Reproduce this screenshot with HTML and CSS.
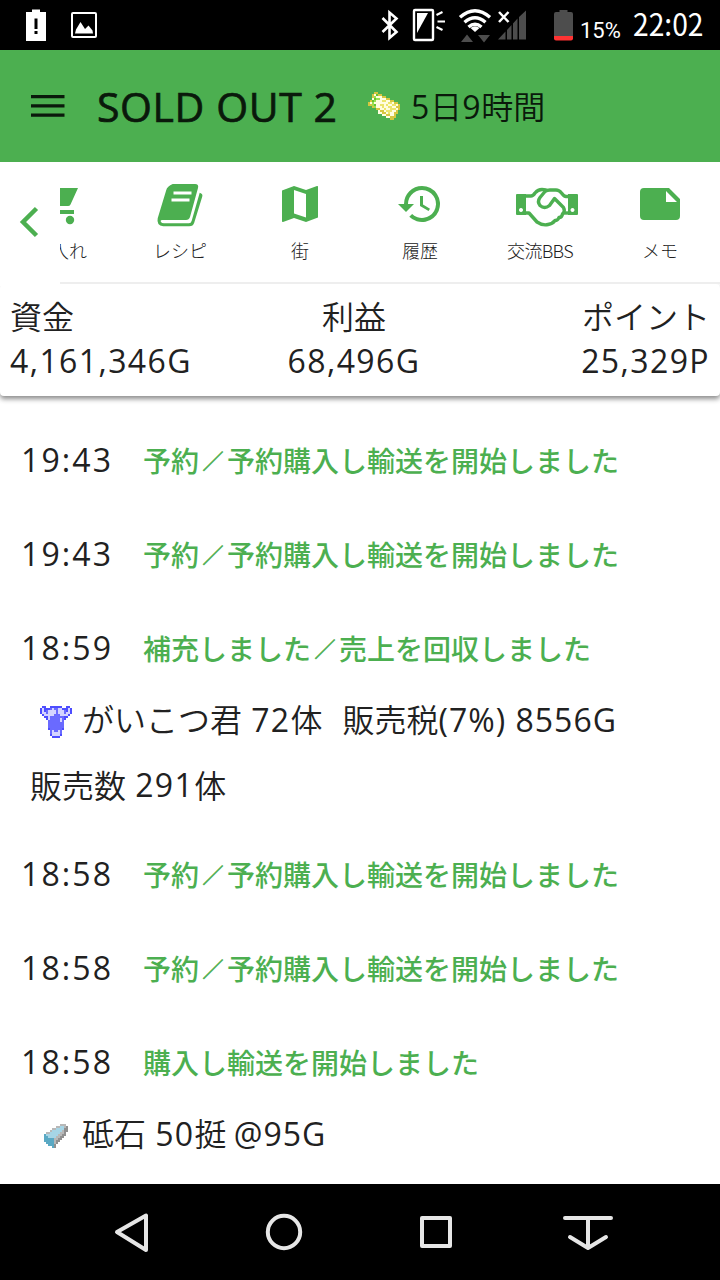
FILE: index.html
```
<!DOCTYPE html>
<html lang="ja">
<head>
    <meta charset="UTF-8">
    <meta name="viewport" content="width=device-width, initial-scale=1.0">
    <title>SOLD OUT 2</title>
    <link rel="stylesheet" href="styles.css">
</head>
<body>
    <div class="screen">
        <div class="status-bar">
            <svg class="status-left" width="110" height="50" viewBox="0 0 110 50">
                <path fill="#fff" d="M26 12h6V9.500h8V12h6v29H26z"/>
                <path fill="#000" d="M34.500 18.500h3v10.500h-3zM34.500 31h3v3h-3z"/>
                <rect x="72" y="13" width="24" height="24" rx="1" fill="none" stroke="#fff" stroke-width="2"/>
                <path fill="#fff" d="M75 33.500l1-4 4.500-7.500 4.500 7 3.500-3.500 4 5 .5 3z"/>
            </svg>
            <svg class="status-icons" width="205" height="50" viewBox="370 0 205 50">
                <path fill="none" stroke="#fff" stroke-width="2.600" d="M382.500 18l14 14-7 6V12.500l7 6-14 13.500"/>
                <rect x="414" y="10" width="19" height="30" rx="1" fill="none" stroke="#fff" stroke-width="2.400"/>
                <path fill="#fff" d="M417 13h11l-11 20z"/>
                <path stroke="#fff" stroke-width="2.200" d="M436.500 15l6-3M437.500 21.500h7.500M436.500 27l6 3"/>
                <g fill="none" stroke="#fff" stroke-width="3.400">
                    <path d="M460 17.300q15-13 30 0"/>
                    <path d="M464.500 22.300q10.500-9 21 0"/>
                    <path d="M468.500 27q6.500-5.500 13 0"/>
                </g>
                <path fill="#fff" d="M470.500 28q4.500-3.500 9 0l-4.500 4z"/>
                <path fill="#4d4d4d" d="M461 42l6-7.500 6 7.500zM478 35h12l-6 7.500z"/>
                <path fill="#4d4d4d" d="M498 39.500l7.500-8v8zM507 30l4.500-5v14.500H507zM513 23.500l4.500-5v21H513zM519 17l7-6.500v29h-7z"/>
                <path stroke="#fff" stroke-width="2.500" d="M499 12l9.500 10M508.500 12L499 22"/>
                <path fill="#4d4d4d" d="M556 12h3.500v-2h8v2h3.500q2 0 2 2v22h-19V14q0-2 2-2z"/>
                <path fill="#f33" d="M554 36h19v2.500q0 2-2 2h-15q-2 0-2-2z"/>
            </svg>
            <span class="battery">15%</span>
            <span class="clock">22:02</span>
        </div>

        <header class="app-bar">
            <svg class="menu" width="34" height="24" viewBox="0 0 34 24">
                <path fill="#0a190b" d="M0 1h33.500v3.300H0zM0 10.300h33.500v3.300H0zM0 19.500h33.500v3.300H0z"/>
            </svg>
            <h1>SOLD OUT 2</h1>
            <!-- ticket -->
            <svg class="pixel ticket" width="34" height="28" viewBox="0 0 17 14" shape-rendering="crispEdges">
                <path fill="#fffde0" d="M3 0h2v1h2v1h2v1h2v1h2v1h2v1h1v3h-1v2h-1v2h-1v1h-2v-1h-2v-1h-2v-1h-2V9H4V8H2V7H0V5h1V4h1V1h1z"/>
                <path stroke="#d6c640" d="M3 .5h2M2 1.500h1M5 1.500h2M2 2.500h1M7 2.500h2M9 3.500h2M1 4.500h1M11 4.500h2M0 5.500h1M13 5.500h2M0 6.500h2M15 6.500h1M2 7.500h2M14 7.500h2M4 8.500h2M15 8.500h1M6 9.500h2M14 9.500h1M7 10.500h2M13 10.500h2M9 11.500h2M13 11.500h1M11 12.500h3M11 13.500h2"/>
                <path stroke="#ece56c" d="M7 4.500h2M10 5.500h2M6 6.500h2M9 6.500h1M12 6.500h2M7 7.500h1M10 7.500h2M8 8.500h1M11 8.500h3M9 9.500h3M10 10.500h1"/>
                <path stroke="#9be052" d="M3 2.500h1M4 3.500h2M3 4.500h1M2 5.500h1M2 6.500h1M3 7.500h1"/>
                <path stroke="#66c32f" d="M4 1.500h1M3 3.500h1M2 4.500h1M3 6.500h1"/>
            </svg>
            <span class="remain"><i class="num">5</i>日<i class="num">9</i>時間</span>
        </header>

        <nav class="tabs">
            <button class="tabs-back">
                <svg width="60" height="120" viewBox="0 0 60 120"><path fill="none" stroke="#4caf50" stroke-width="4.500" d="M36.500 44.500L23 58l13.500 13.500"/></svg>
            </button>
            <a class="tab tab-cut">
                <svg width="64" height="48" viewBox="28 180 64 48"><path fill="#4caf50" d="M42 188h36l-7.500 16.500q-.8 1.500-2.500 1.500H50zM46 210h28v4H46z"/><circle cx="70" cy="220" r="4.200" fill="#4caf50"/></svg>
                <span>仕入れ</span>
            </a>
            <a class="tab">
                <svg width="64" height="48" viewBox="148 180 64 48">
                    <path fill="#4caf50" d="M173 184h22q4 0 3 4l-8 29q-1 3-4 3h-24q-2 0-1 2 .7 1.200 3 1.200h25q2 0 2.700-2.500l8-28q3.500 1 2.500 4l-8 26q-1 3.500-5 3.500h-26q-7-1-5.500-8l8.500-28q1-4 6.500-6.200z"/>
                    <path stroke="#fff" stroke-width="3" d="M173.500 193h18M171.500 200h18"/>
                </svg>
                <span>レシピ</span>
            </a>
            <a class="tab">
                <svg width="64" height="48" viewBox="268 180 64 48">
                    <path fill="#4caf50" fill-rule="evenodd" d="M282 190.500l12-4.500 12 4 11-4q1-.3 1 .7v30.800l-12 4.500-12-4-11 4q-1 .2-1-.8zM294 190v23.500l12 4V194z"/>
                </svg>
                <span>街</span>
            </a>
            <a class="tab">
                <svg width="48" height="48" viewBox="0 0 24 24">
                    <path fill="#4caf50" d="M13 3a9 9 0 0 0-9 9H1l4 4 4-4H6a7 7 0 1 1 2.060 4.940l-1.420 1.420A9 9 0 1 0 13 3zm-1 5v5l4.280 2.540.72-1.210-3.500-2.080V8z"/>
                </svg>
                <span>履歴</span>
            </a>
            <a class="tab">
                <svg width="78" height="48" viewBox="501 180 78 48">
                    <path fill="#4caf50" fill-rule="evenodd" d="M517 194h9v21h-9q-1 0-1-1v-19q0-1 1-1zm4 14a2 2 0 1 0 .01 0zM568 194h9q1 0 1 1v19q0 1-1 1h-9zm4.500 14a2 2 0 1 0 .01 0z"/>
                    <g fill="none" stroke="#4caf50" stroke-width="3.400" stroke-linejoin="round">
                        <path d="M525 196h6q2 0 4-3 3-3.500 7-3.500 4 0 6 1.500"/>
                        <path d="M525 213h4l8 9q6 4 11 2.500 5-1 7-4 3 0 4-3 3 0 3.500-3.500 3-3 1-6.500l-9-9-5 7q-5 4-9.500 0-3-4 0-8l5-6q2-1.500 5-1.500h6q3 0 5.500 3 2.500 3.500 4.500 3.500h3"/>
                        <path d="M564 213h6"/>
                    </g>
                </svg>
                <span class="narrow">交流BBS</span>
            </a>
            <a class="tab">
                <svg width="64" height="48" viewBox="628 180 64 48">
                    <path fill="#4caf50" fill-rule="evenodd" d="M644 188h25l11 11v17q0 4-4 4h-32q-4 0-4-4v-24q0-4 4-4zm22 3v11h11z"/>
                </svg>
                <span>メモ</span>
            </a>
        </nav>

        <section class="summary">
            <div class="stat"><span>資金</span><i class="num">4,161,346G</i></div>
            <div class="stat stat-center"><span>利益</span><i class="num">68,496G</i></div>
            <div class="stat stat-right"><span>ポイント</span><i class="num">25,329P</i></div>
        </section>

        <main class="history">
            <div class="entry"><time class="num">19:43</time><b>予約<i class="slash">／</i>予約購入し輸送を開始しました</b></div>
            <div class="entry"><time class="num">19:43</time><b>予約<i class="slash">／</i>予約購入し輸送を開始しました</b></div>
            <div class="entry"><time class="num">18:59</time><b>補充しました<i class="slash">／</i>売上を回収しました</b></div>
            <div class="detail">
                <!-- skull -->
                <svg class="pixel skull" width="32" height="32" viewBox="0 0 16 16" shape-rendering="crispEdges">
                    <path fill="#4d4dff" d="M0 1h1V0h2v1h2V0h6v1h2V0h2v1h1v3h-1v1h-1v1h-1v1h-1v5h-1v3h-1v1H6v-1H5v-3H4V7H3V6H2V5H1V4H0z"/>
                    <path fill="#6a6aff" d="M5 1h6v1h2v3h-1v6h-1v3H5v-3H4V5H3V2h2z"/>
                    <path fill="#d4d4ff" d="M1 1h1v2h1v1h1v1H2V4H1zM14 1h1v3h-1v1h-2V4h1V3h1zM4 2h2V1h1v1h1v2H7v1H5v2H4zM9 1h2v1h1v3h-2V4H9zM10 6h1v2h-1zM6 12h1v1h2v-1h1v3H6z"/>
                </svg>
                <span>がいこつ君 <i class="num">72</i>体</span><span class="tax">販売税<i class="num fee">(7%) 8556G</i></span>
            </div>
            <div class="detail">販売数 <i class="num">291</i>体</div>
            <div class="entry"><time class="num">18:58</time><b>予約<i class="slash">／</i>予約購入し輸送を開始しました</b></div>
            <div class="entry"><time class="num">18:58</time><b>予約<i class="slash">／</i>予約購入し輸送を開始しました</b></div>
            <div class="entry"><time class="num">18:58</time><b>購入し輸送を開始しました</b></div>
            <div class="detail">
                <!-- whetstone -->
                <svg class="pixel stone" width="24" height="24" viewBox="0 0 12 12" shape-rendering="crispEdges">
                    <path fill="#909090" d="M8 0h3v1h1v3h-1v2h-1v1H9v1H8v1H7v1H6v2H4v-1H2v-1H1V9H0V5h1V4h2V3h1V2h2V1h2z"/>
                    <path fill="#b8b8b8" d="M8 0h3v2h-1v3H9v1H8v1H7v1H6v2H5V7H0V5h1V4h2V3h1V2h2V1h2z"/>
                    <path fill="#a6d5e6" d="M8 1h2v2H9v1H8v1H7v1H6v1H2V6H1V5h2V4h1V3h2V2h2z"/>
                    <path fill="#5aa9c4" d="M0 5h1v1h1v1h3v5H4v-1H2v-1H1V9H0z"/>
                </svg>
                <span>砥石 <i class="num">50</i>挺 <i class="num fee">@95G</i></span>
            </div>
        </main>

        <footer class="nav-bar">
            <svg width="720" height="96" viewBox="0 1184 720 96" fill="none" stroke="#e6e6e6" stroke-width="4" stroke-linejoin="round" stroke-linecap="round">
                <path d="M146 1215.500v34.500L117 1232z"/>
                <circle cx="284" cy="1232" r="16.200"/>
                <rect x="422" y="1218" width="28" height="28"/>
                <path d="M565 1218h46M588 1218v30M570 1237l18 11 18-11"/>
            </svg>
        </footer>
    </div>
</body>
</html>
```
FILE: styles.css
```
* {
    box-sizing: border-box;
}
body {
    margin: 0;
    background: #fff;
    color: #212121;
    font-family: "Noto Sans CJK JP", sans-serif;
    font-size: 32px;
    font-weight: 350;
}
.screen {
    width: 720px;
    height: 1280px;
    display: flex;
    flex-direction: column;
    overflow: hidden;
}
svg {
    display: block;
    flex: none;
}
i {
    font-style: normal;
}
.num {
    font-family: "Open Sans", "Noto Sans CJK JP", sans-serif;
    font-weight: 400;
    letter-spacing: 1.4px;
}
.status-bar {
    display: flex;
    height: 50px;
    background: #000;
    color: #fff;
    font-family: Roboto, sans-serif;
    font-weight: 400;
}
.status-icons {
    margin-left: 260px;
}
.battery {
    width: 58px;
    padding-left: 5px;
    font-size: 22px;
    line-height: 62px;
}
.clock {
    font-family: "Noto Sans CJK JP", sans-serif;
    font-size: 31px;
    line-height: 46px;
    transform: scaleX(0.91);
    transform-origin: left;
}
.app-bar {
    display: flex;
    align-items: center;
    height: 112px;
    padding-left: 31px;
    background: #4caf50;
    color: #0a190b;
}
h1 {
    width: 240px;
    margin: 0 0 0 32px;
    font-family: "Open Sans", sans-serif;
    font-size: 41px;
    font-weight: 400;
    letter-spacing: 0.6px;
    -webkit-text-stroke: 0.7px #0a190b;
    white-space: nowrap;
}
.ticket {
    margin-left: 31px;
}
.remain {
    margin: -3px 0 0 9px;
}
.remain .num {
    letter-spacing: 0.8px;
}
.tabs {
    display: flex;
    flex: none;
    position: relative;
    height: 122px;
    background: #fff;
    border-bottom: 2px solid #eee;
}
.tabs-back {
    position: absolute;
    left: 0;
    top: 0;
    width: 60px;
    height: 124px;
    padding: 0;
    border: none;
    background: #fff;
}
.tab {
    display: flex;
    flex-direction: column;
    align-items: center;
    width: 120px;
    padding-top: 18px;
    font-size: 18px;
    font-weight: 300;
    line-height: 26px;
}
.tab span {
    margin-top: 9px;
}
.narrow {
    letter-spacing: -0.7px;
}
.summary {
    display: grid;
    flex: none;
    grid-template-columns: 1fr 132px 1fr;
    height: 112px;
    padding: 8px 10px;
    border-radius: 4px;
    box-shadow: 0 3px 5px rgba(0, 0, 0, 0.45);
    line-height: 46px;
}
.stat {
    display: flex;
    flex-direction: column;
}
.stat-center {
    align-items: center;
    margin: 0 6px 0 -6px;
}
.stat-right {
    align-items: flex-end;
}
.history {
    flex: 1;
    padding-top: 7px;
    overflow: hidden;
}
.entry {
    display: flex;
    height: 94px;
    padding: 38px 0 18px 21px;
    line-height: 38px;
}
time.num {
    width: 122px;
    letter-spacing: 2.1px;
}
.entry b {
    color: #4caf50;
    font-size: 28px;
    font-weight: 500;
}
.slash {
    display: inline-block;
    transform: scale(0.75);
    -webkit-text-stroke: 0.8px #4caf50;
}
.detail {
    display: flex;
    align-items: center;
    height: 66px;
    padding-left: 30px;
    white-space: pre;
}
.detail .num {
    margin-left: 2px;
}
.detail .fee {
    margin-left: 0;
    letter-spacing: 1px;
}
.skull {
    margin: 8px 10px 0;
}
.tax {
    margin-left: 20px;
}
.stone {
    margin: 8px 14px 0;
}
.nav-bar {
    height: 96px;
    background: #000;
}
```
